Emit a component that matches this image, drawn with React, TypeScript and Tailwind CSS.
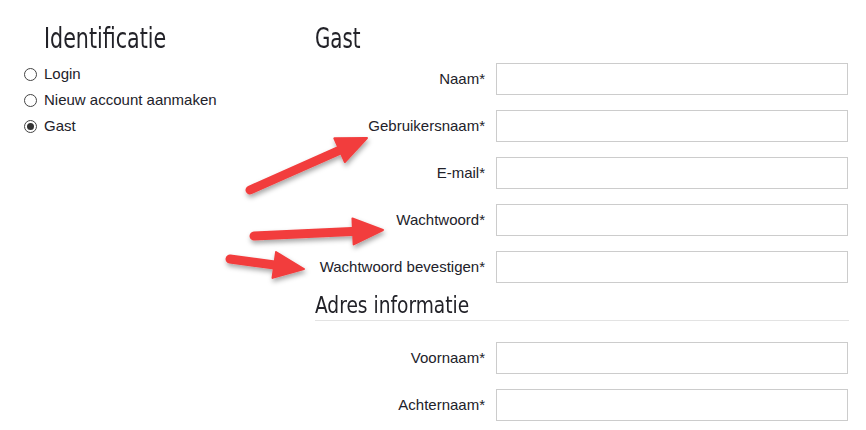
const heading = { fontFamily: '"DejaVu Sans Condensed", "Liberation Sans Narrow", sans-serif' }
const body = { fontFamily: '"Liberation Sans", Arial, sans-serif' }

const gastFields = ['Naam*', 'Gebruikersnaam*', 'E-mail*', 'Wachtwoord*', 'Wachtwoord bevestigen*']
const adresFields = ['Voornaam*', 'Achternaam*']

function Radio({ label, checked }: { label: string; checked?: boolean }) {
  return (
    <label className="flex items-center gap-[7px] h-[26px] text-[15px] text-[#22222a]">
      <span className="w-[13px] h-[13px] rounded-full border border-[#444] flex items-center justify-center bg-white">
        {checked && <span className="w-[7px] h-[7px] rounded-full bg-[#333]" />}
      </span>
      {label}
    </label>
  )
}

function Field({ label }: { label: string }) {
  return (
    <div className="flex items-center h-[32px]">
      <div className="w-[181px] pr-[11px] text-right text-[15px] text-[#22222a] whitespace-nowrap">{label}</div>
      <div className="w-[352px] h-[32px] border border-[#cccccc] bg-white" />
    </div>
  )
}

function Arrow({ x1, y1, x2, y2 }: { x1: number; y1: number; x2: number; y2: number }) {
  const dx = x2 - x1
  const dy = y2 - y1
  const len = Math.sqrt(dx * dx + dy * dy)
  const ux = dx / len
  const uy = dy / len
  const head = 30
  const bx = x2 - ux * head
  const by = y2 - uy * head
  const px = -uy
  const py = ux
  const hw = 13
  return (
    <g>
      <line x1={x1} y1={y1} x2={bx + ux * 4} y2={by + uy * 4} stroke="#f23d3d" strokeWidth={9} strokeLinecap="round" />
      <polygon
        points={`${x2},${y2} ${bx + px * hw},${by + py * hw} ${bx - px * hw},${by - py * hw}`}
        fill="#f23d3d"
        stroke="#f23d3d"
        strokeWidth={2}
        strokeLinejoin="round"
      />
    </g>
  )
}

export default function App() {
  return (
    <div className="relative w-[866px] h-[430px] bg-white overflow-hidden" style={body}>
      <div className="flex pl-[24px] pt-[20px]">
        <div className="w-[291px]">
          <h1 className="pl-[20px] text-[29px] leading-[36px] text-[#222228]" style={heading}>
            <span className="inline-block origin-left scale-x-[0.79]">Identificatie</span>
          </h1>
          <div className="mt-[5px] flex flex-col">
            <Radio label="Login" />
            <Radio label="Nieuw account aanmaken" />
            <Radio label="Gast" checked />
          </div>
        </div>
        <div className="w-[534px]">
          <h2 className="text-[29px] leading-[36px] text-[#222228]" style={heading}>
            <span className="inline-block origin-left scale-x-[0.76]">Gast</span>
          </h2>
          <div className="mt-[7px] flex flex-col gap-[15px]">
            {gastFields.map((f) => <Field key={f} label={f} />)}
          </div>
          <h3 className="mt-[9px] pb-[2px] border-b border-[#e3e3e3] text-[23px] leading-[26px] text-[#222228]" style={heading}>
            <span className="inline-block origin-left scale-x-[0.9]">Adres informatie</span>
          </h3>
          <div className="mt-[21px] flex flex-col gap-[15px]">
            {adresFields.map((f) => <Field key={f} label={f} />)}
          </div>
        </div>
      </div>
      <svg className="absolute inset-0 pointer-events-none" width="866" height="430">
        <defs>
          <filter id="sh" x="-20%" y="-50%" width="140%" height="200%">
            <feDropShadow dx="1" dy="3" stdDeviation="2.5" floodColor="#000" floodOpacity="0.35" />
          </filter>
        </defs>
        <g filter="url(#sh)">
          <Arrow x1={250} y1={190} x2={367} y2={138} />
          <Arrow x1={254} y1={236} x2={383} y2={230} />
          <Arrow x1={230} y1={259} x2={304} y2={269} />
        </g>
      </svg>
    </div>
  )
}
